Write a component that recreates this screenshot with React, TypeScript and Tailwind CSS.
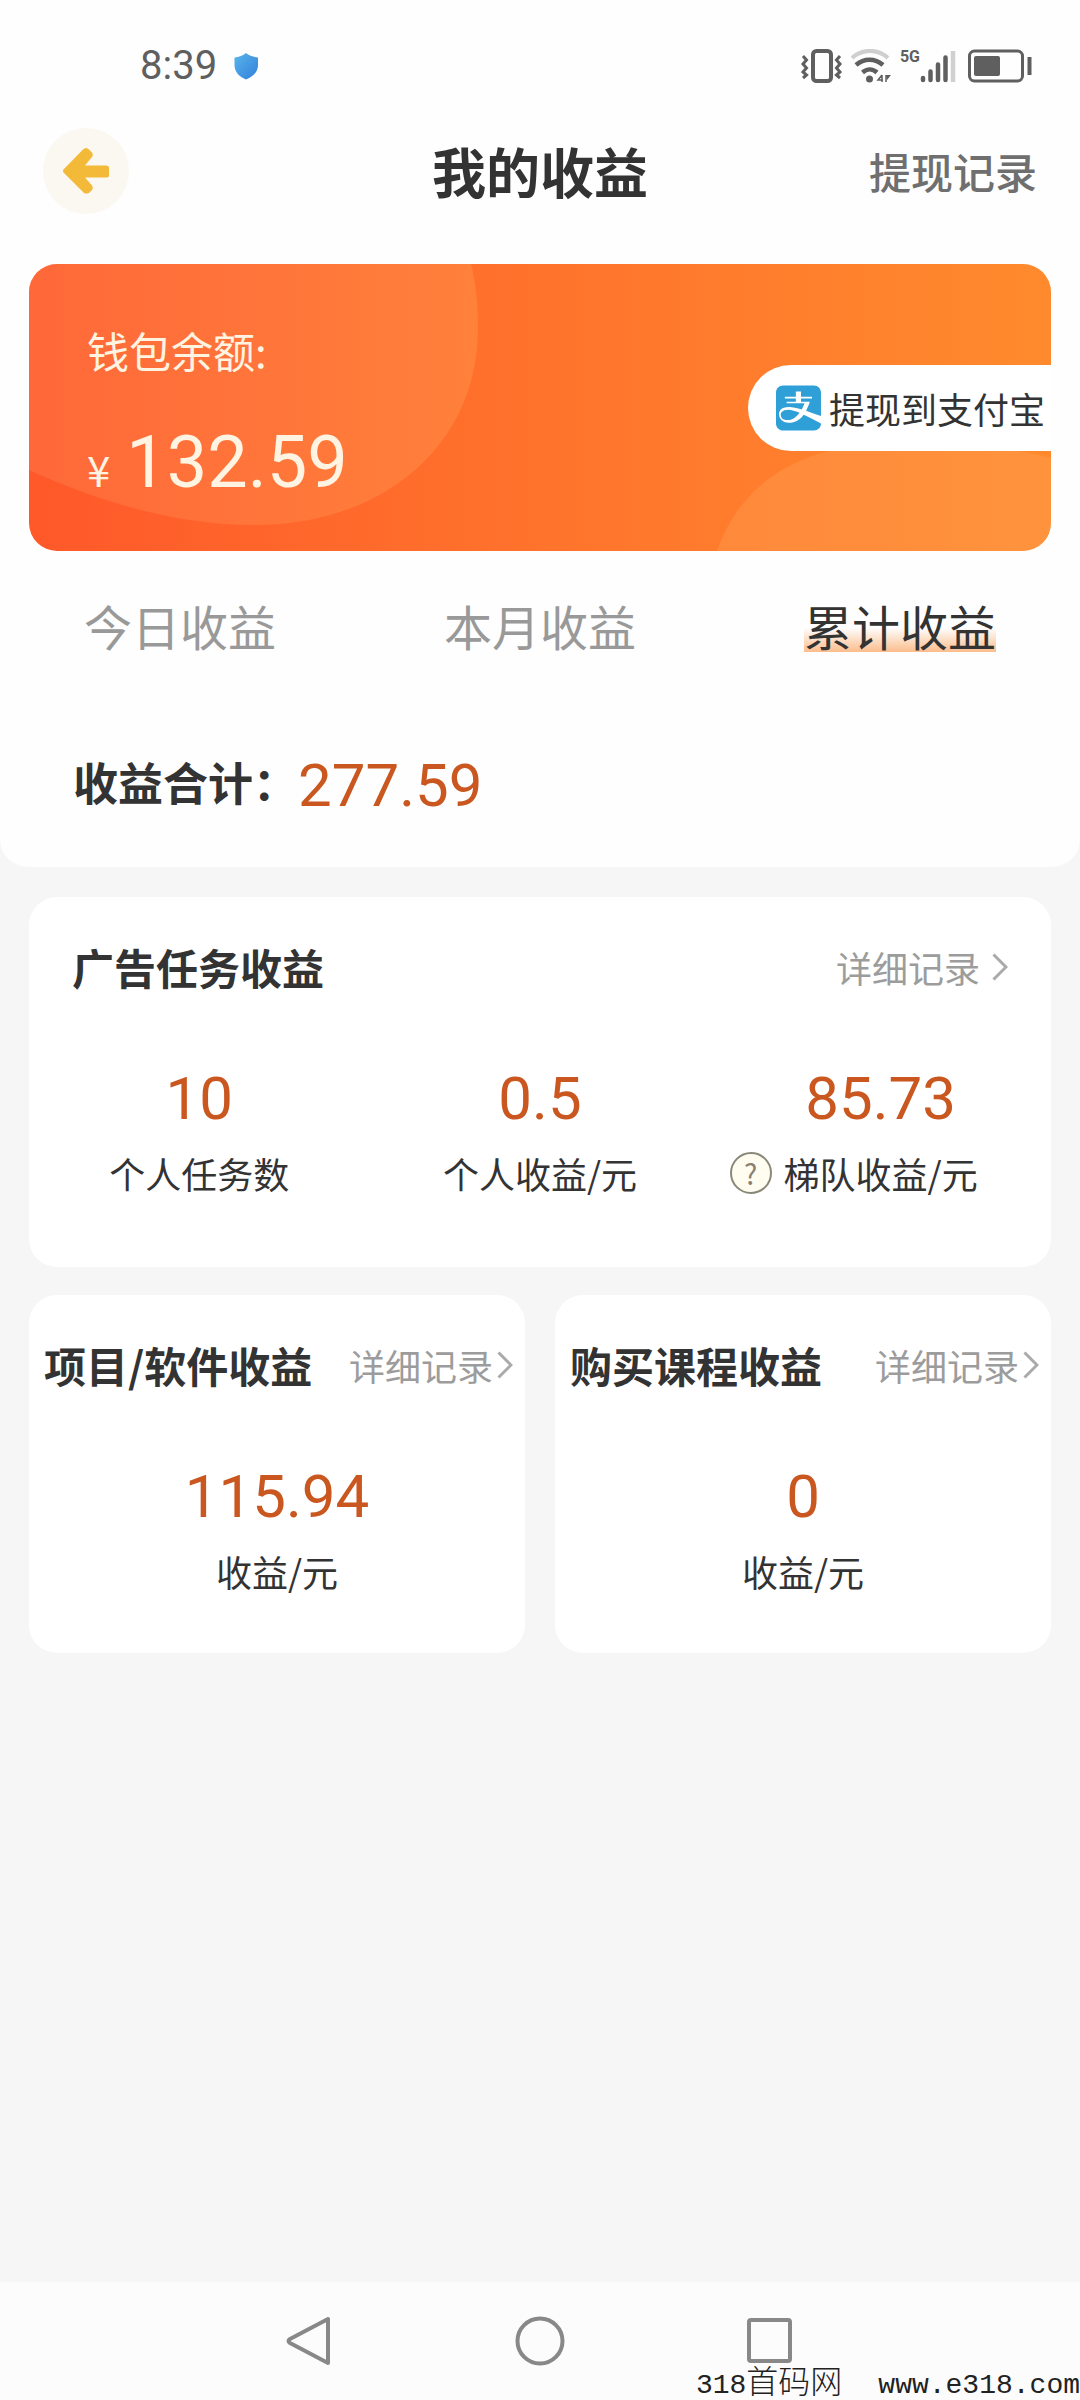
import type { ReactNode } from "react";
import { FaAlipay } from "react-icons/fa";

function StatusBar() {
    return (
        <div className="flex h-32 items-center justify-between pt-1 pr-12 pl-[140px] text-[#5f5f5f]">
            <div className="flex items-center gap-4">
                <span className="font-['Roboto','Noto_Sans_CJK_SC',sans-serif] text-[40px] leading-none">8:39</span>
                <svg className="h-7 w-[26px]" viewBox="0 0 26 28">
                    <defs>
                        <linearGradient id="shield" x1="0" y1="0" x2="1" y2="1">
                            <stop offset="0" stopColor="#5bb4ea" />
                            <stop offset="1" stopColor="#2f80dc" />
                        </linearGradient>
                    </defs>
                    <path
                        d="M13 1C10 3.500 6 5 1.500 5.500V13c0 7 4.500 11.500 11.500 14.500C20 24.500 25 20 25 13V5.500C20.500 5 16 3.500 13 1z"
                        fill="url(#shield)"
                    />
                </svg>
            </div>
            <div className="flex items-center gap-2">
                {/* Vibrate */}
                <svg className="h-[34px] w-[41px]" viewBox="0 0 41 34" fill="none" stroke="currentColor">
                    <rect x="12" y="2" width="18" height="30" rx="3.500" strokeWidth="4" />
                    <path
                        d="M2 7l3.500 4L2 15l3.500 4L2 23l3.500 3L2 29M39 7l-3.500 4 3.500 4-3.500 4 3.500 4-3.500 3L39 29"
                        strokeWidth="3"
                    />
                </svg>
                {/* Wifi */}
                <svg className="h-[34px] w-[42px]" viewBox="0 0 42 34" fill="none" stroke="currentColor">
                    <path d="M2 9C12-.5 28-.5 38 9" stroke="#cfcfcf" strokeWidth="4" />
                    <path d="M6 16c8-7 19-7 27 0" strokeWidth="4.500" />
                    <path d="M12.500 23.500c4.500-4 10-4 14.500 0" strokeWidth="4.500" />
                    <circle cx="19.500" cy="30" r="3.500" fill="currentColor" stroke="none" />
                    <path d="M32 26v7M32 26l-4 5h5M36 26v7" strokeWidth="1.500" />
                    <path d="M36 26h5l-4 5z" fill="currentColor" stroke="none" />
                </svg>
                <div className="flex items-start">
                    <span className="font-['Roboto',sans-serif] text-[16px] leading-4 font-bold">5G</span>
                    <svg className="h-[34px] w-[36px]" viewBox="0 0 36 34" fill="none" strokeLinecap="round" strokeWidth="4.500">
                        <path d="M3 29v2M10.500 22.500V31M18 15.500V31M25.500 8.500V31" stroke="currentColor" />
                        <path d="M33 2v31" stroke="#d0d0d0" strokeLinecap="butt" />
                    </svg>
                </div>
                <svg className="ml-1 h-[34px] w-[64px]" viewBox="0 0 64 34" fill="none" stroke="currentColor">
                    <rect x="1.500" y="2" width="53" height="30" rx="5" strokeWidth="3" />
                    <rect x="6" y="7" width="26" height="20" rx="2" fill="currentColor" stroke="none" />
                    <path d="M61.500 8v18" strokeWidth="4" />
                </svg>
            </div>
        </div>
    );
}

function Header() {
    return (
        <header className="grid h-[86px] grid-cols-[1fr_auto_1fr] items-center px-[43px]">
            <button
                type="button"
                aria-label="返回"
                className="flex h-[86px] w-[86px] items-center justify-center rounded-full bg-[#fbf8f2]"
            >
                <svg className="h-[46px] w-[46px]" viewBox="0 0 46 46" fill="#f3ba3a">
                    <path d="M.5 21.500L20 1.500c2-2 4-2 6 0l3 3c1 1.500 1 3 0 4.500l-7 8.500h21c2 0 3 1 3 2v8c0 1.500-1 2-3 2H22l7 8c1 1.500 1 3 0 4.500l-2 2c-2 2-5 2-7 0L.5 24.500q-1-1.500 0-3z" />
                </svg>
            </button>
            <h1 className="text-[54px] leading-[60px] font-bold text-[#333333]">我的收益</h1>
            <a href="#records" className="justify-self-end text-[42px] leading-[60px] font-medium text-[#6f6f6f]">
                提现记录
            </a>
        </header>
    );
}

function WalletCard() {
    return (
        <section className="relative mx-[29px] mt-[50px] flex items-start justify-between overflow-hidden rounded-[28px] bg-linear-to-r from-[#ff582a] via-[#ff732c] to-[#ff8a2d] pb-[42px]">
            <svg
                className="absolute inset-0 h-full w-full"
                viewBox="0 0 1022 287"
                preserveAspectRatio="none"
                aria-hidden="true"
            >
                <defs>
                    <linearGradient id="blob" x1="0" y1="0" x2="1" y2="0">
                        <stop offset="0" stopColor="#ff8050" stopOpacity="0.4" />
                        <stop offset="1" stopColor="#ff9a50" stopOpacity="0.4" />
                    </linearGradient>
                </defs>
                <path
                    d="M0 206C75 240 150 261 225 261c130 0 224-80 224-198 0-23-2-43-7-63H0z"
                    fill="url(#blob)"
                />
                <path d="M688 287C706 235 750 185 850 180c75-3 140 5 172 14v93z" fill="#ffa860" fillOpacity="0.3" />
            </svg>
            <div className="relative pt-14 pl-[58px] text-[#fff3e2]">
                <h2 className="text-[42px] leading-[60px]">钱包余额:</h2>
                <p className="mt-[43px] flex items-baseline gap-4 leading-[80px]">
                    <span className="text-[42px]">¥</span>
                    <span className="font-['Roboto',sans-serif] text-[72px]">132.59</span>
                </p>
            </div>
            <button
                type="button"
                className="relative mt-[101px] flex h-[86px] items-center gap-2 rounded-l-full bg-white pr-1.5 pl-7 text-[36px] text-[#333333]"
            >
                <FaAlipay className="h-[52px] w-[45px] text-[#2f9fd8]" />
                提现到支付宝
            </button>
        </section>
    );
}

const tabs = ["今日收益", "本月收益", "累计收益"];

function Tabs() {
    return (
        <nav className="mt-[47px] grid grid-cols-3 justify-items-center text-[48px] leading-[54px]">
            {tabs.map((tab) => (
                <button
                    key={tab}
                    type="button"
                    className={
                        tab === "累计收益"
                            ? "bg-linear-to-b from-transparent from-55% to-[#fbbd8c] text-[#333333]"
                            : "text-[#999999]"
                    }
                >
                    {tab}
                </button>
            ))}
        </nav>
    );
}

function DetailLink({ className }: { className: string }) {
    return (
        <a href="#detail" className={`flex items-center text-[36px] text-[#9c9c9c] ${className}`}>
            详细记录
            <svg className="h-7 w-4" viewBox="0 0 16 28" fill="none" stroke="#aaaaaa" strokeWidth="3">
                <path d="M1.500 1.500L14 14 1.500 26.500" />
            </svg>
        </a>
    );
}

function Stat({ value, label, icon }: { value: string; label: string; icon?: ReactNode }) {
    return (
        <div className="flex flex-col items-center">
            <span className="font-['Roboto',sans-serif] text-[60px] leading-[60px] text-[#c9571f]">{value}</span>
            <span className="mt-5 flex items-center text-[36px] leading-[48px] text-[#333333]">
                {icon}
                {label}
            </span>
        </div>
    );
}

function HelpButton() {
    return (
        <button
            type="button"
            aria-label="说明"
            className="mr-3 -ml-[54px] flex h-[42px] w-[42px] items-center justify-center rounded-full border-2 border-[#8a8878] bg-[#fffdf0] text-[28px] leading-none text-[#8a7f70]"
        >
            ?
        </button>
    );
}

function SmallCard({ title, value }: { title: string; value: string }) {
    return (
        <section className="rounded-[28px] bg-white pt-10 pb-[58px]">
            <div className="flex items-center justify-between pr-3 pl-[15px] leading-[60px]">
                <h2 className="text-[42px] font-bold text-[#333333]">{title}</h2>
                <DetailLink className="gap-1" />
            </div>
            <div className="mt-[72px]">
                <Stat value={value} label="收益/元" />
            </div>
        </section>
    );
}

function SystemNav() {
    return (
        <footer className="relative bg-[#fcfcfc]">
            <div className="flex h-[118px] items-center justify-center gap-[181px] text-[#888888]">
                <button type="button" aria-label="后退">
                    <svg className="h-[50px] w-[50px]" viewBox="0 0 50 50" fill="none" stroke="currentColor" strokeWidth="4" strokeLinejoin="round">
                        <path d="M44 3v44L6 27q-3-2 0-4z" />
                    </svg>
                </button>
                <button type="button" aria-label="主页">
                    <svg className="h-[50px] w-[50px]" viewBox="0 0 50 50" fill="none" stroke="currentColor" strokeWidth="4">
                        <circle cx="25" cy="25" r="22.500" />
                    </svg>
                </button>
                <button type="button" aria-label="最近任务">
                    <svg className="h-[50px] w-[50px]" viewBox="0 0 50 50" fill="none" stroke="currentColor" strokeWidth="4">
                        <rect x="3" y="4" width="41" height="41" rx="2" />
                    </svg>
                </button>
            </div>
            {/* Site mark over the corner */}
            <div className="absolute right-0 bottom-0 flex items-baseline font-['Liberation_Mono','Noto_Sans_CJK_SC',monospace] text-[28px] leading-7 text-[#222222]">
                <span>318</span>
                <span className="text-[32px] font-light">首码网</span>
                <span className="ml-9">www.e318.com</span>
            </div>
        </footer>
    );
}

export default function App() {
    return (
        <div className="flex min-h-screen flex-col bg-[#f6f6f6] font-['Noto_Sans_CJK_SC',sans-serif]">
            <div className="rounded-b-[28px] bg-[#fefefe] pb-[51px]">
                <StatusBar />
                <Header />
                <WalletCard />
                <Tabs />
                <div className="mt-24 flex items-center pl-[73px] leading-[60px]">
                    <span className="text-[45px] font-bold text-[#333333]">收益合计：</span>
                    <span className="pt-2 font-['Roboto',sans-serif] text-[60px] text-[#c9571f]">277.59</span>
                </div>
            </div>
            <main className="flex-1 px-[29px] pt-[30px]">
                <section className="rounded-[28px] bg-white pt-10 pb-[70px]">
                    <div className="flex items-center justify-between px-[43px] leading-[60px]">
                        <h2 className="text-[42px] font-bold text-[#333333]">广告任务收益</h2>
                        <DetailLink className="gap-3" />
                    </div>
                    <div className="mt-[72px] grid grid-cols-3">
                        <Stat value="10" label="个人任务数" />
                        <Stat value="0.5" label="个人收益/元" />
                        <Stat value="85.73" label="梯队收益/元" icon={<HelpButton />} />
                    </div>
                </section>
                <div className="mt-7 grid grid-cols-2 gap-[30px]">
                    <SmallCard title="项目/软件收益" value="115.94" />
                    <SmallCard title="购买课程收益" value="0" />
                </div>
            </main>
            <SystemNav />
        </div>
    );
}
